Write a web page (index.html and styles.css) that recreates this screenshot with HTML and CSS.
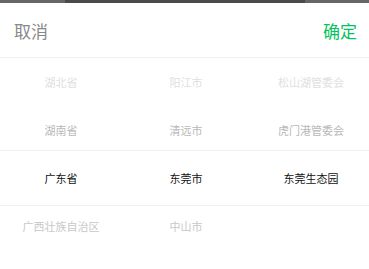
FILE: index.html
```html
<!DOCTYPE html>
<html lang="zh-CN">
<head>
    <meta charset="UTF-8">
    <title>地区选择</title>
    <link rel="stylesheet" href="styles.css">
</head>
<body>
    <div class="topbar"><div class="topbar-mid"></div></div>
    <div class="picker">
        <div class="picker-header">
            <span class="btn-cancel">取消</span>
            <span class="btn-ok">确定</span>
        </div>
        <div class="picker-body">
            <div class="column col-province">
                <div class="item r1">湖北省</div>
                <div class="item r2">湖南省</div>
                <div class="item r3">广东省</div>
                <div class="item r4">广西壮族自治区</div>
                <div class="item r5">海南省</div>
            </div>
            <div class="column col-city">
                <div class="item r1">阳江市</div>
                <div class="item r2">清远市</div>
                <div class="item r3">东莞市</div>
                <div class="item r4">中山市</div>
                <div class="item r5"></div>
            </div>
            <div class="column col-area">
                <div class="item r1">松山湖管委会</div>
                <div class="item r2">虎门港管委会</div>
                <div class="item r3">东莞生态园</div>
                <div class="item r4"></div>
                <div class="item r5"></div>
            </div>
            <div class="indicator"></div>
        </div>
    </div>
</body>
</html>
```

FILE: styles.css
```css
body {
    margin: 0;
    background: #fff;
    font-family: "Noto Sans CJK SC", "Noto Sans", sans-serif;
    overflow: hidden;
}
.topbar {
    height: 3px;
    background: #666;
    display: flex;
    justify-content: center;
}
.topbar-mid {
    width: 240px;
    background: #4a4a4a;
}
.picker-header {
    height: 54px;
    display: flex;
    align-items: center;
    justify-content: space-between;
    padding: 0 12px 0 14px;
    border-bottom: 1px solid #f0f0f0;
    font-size: 17px;
}
.btn-cancel { color: #888; }
.btn-ok { color: #07c160; }
.picker-body {
    position: relative;
    display: flex;
}
.col-province { width: 122px; }
.col-city { width: 128px; }
.col-area { flex: 1; padding-left: 3px; }
.item {
    height: 48px;
    display: flex;
    align-items: center;
    justify-content: center;
    font-size: 11px;
}
.r1 { color: #e0e0e0; }
.r2 { color: #b8b8b8; }
.r3 { color: #111; }
.r4 { color: #c8c8c8; }
.r5 { color: #e6e6e6; }
.indicator {
    position: absolute;
    left: 0;
    right: 0;
    top: 92px;
    height: 54px;
    border-top: 1px solid #f0f0f0;
    border-bottom: 1px solid #f0f0f0;
    pointer-events: none;
}
```
